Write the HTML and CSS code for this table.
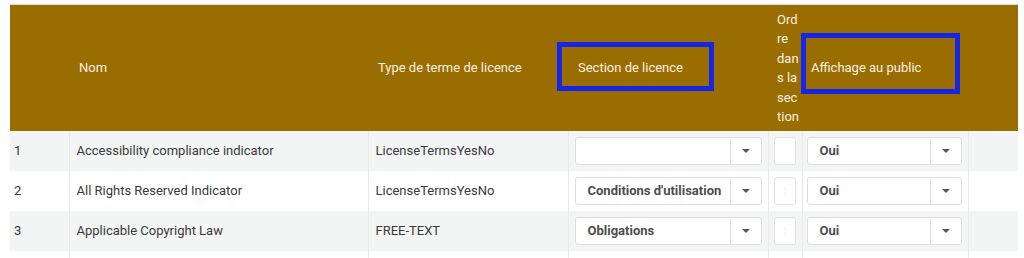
FILE: index.html
```html
<!DOCTYPE html>
<html lang="fr">
<head>
<meta charset="utf-8">
<title>Termes de licence</title>
<link rel="stylesheet" href="styles.css">
</head>
<body>
<div class="wrap">
<table class="grid">
  <colgroup>
    <col class="c-num"><col class="c-nom"><col class="c-type"><col class="c-sect"><col class="c-ord"><col class="c-aff"><col class="c-end">
  </colgroup>
  <thead>
    <tr>
      <th></th>
      <th>Nom</th>
      <th>Type de terme de licence</th>
      <th class="th-sect">Section de licence<span class="mark mark-sect"></span></th>
      <th class="th-ord">Ordre dans la section</th>
      <th class="th-aff">Affichage au public<span class="mark mark-aff"></span></th>
      <th></th>
    </tr>
  </thead>
  <tbody>
    <tr>
      <td>1</td>
      <td>Accessibility compliance indicator</td>
      <td>LicenseTermsYesNo</td>
      <td class="td-sect"><div class="sel"><span class="sel-v"></span><span class="sel-a"><i class="tri"></i></span></div></td>
      <td class="td-ord"><div class="inp"></div></td>
      <td class="td-aff"><div class="sel"><span class="sel-v">Oui</span><span class="sel-a"><i class="tri"></i></span></div></td>
      <td></td>
    </tr>
    <tr>
      <td>2</td>
      <td>All Rights Reserved Indicator</td>
      <td>LicenseTermsYesNo</td>
      <td class="td-sect"><div class="sel"><span class="sel-v">Conditions d'utilisation</span><span class="sel-a"><i class="tri"></i></span></div></td>
      <td class="td-ord"><div class="inp">:</div></td>
      <td class="td-aff"><div class="sel"><span class="sel-v">Oui</span><span class="sel-a"><i class="tri"></i></span></div></td>
      <td></td>
    </tr>
    <tr>
      <td>3</td>
      <td>Applicable Copyright Law</td>
      <td>FREE-TEXT</td>
      <td class="td-sect"><div class="sel"><span class="sel-v">Obligations</span><span class="sel-a"><i class="tri"></i></span></div></td>
      <td class="td-ord"><div class="inp">:</div></td>
      <td class="td-aff"><div class="sel"><span class="sel-v">Oui</span><span class="sel-a"><i class="tri"></i></span></div></td>
      <td></td>
    </tr>
    <tr class="row-more">
      <td></td>
      <td></td>
      <td></td>
      <td></td>
      <td></td>
      <td></td>
      <td></td>
    </tr>
  </tbody>
</table>
</div>
</body>
</html>
```

FILE: styles.css
```css
html, body {
  margin: 0;
  padding: 0;
  background: #ffffff;
  font-family: Roboto, "Liberation Sans", Arial, sans-serif;
  overflow: hidden;
}

.wrap {
  padding: 4px 6px 0 10px;
}

.grid {
  width: 1008px;
  table-layout: fixed;
  border-collapse: collapse;
  border-top: 1px solid #dcdcdc;
  font-size: 13px;
}

.c-num { width: 59px; }
.c-nom { width: 299px; }
.c-type { width: 200px; }
.c-sect { width: 200px; }
.c-ord { width: 34px; }
.c-aff { width: 166px; }
.c-end { width: 50px; }

.grid thead th {
  background: #9a6d00;
  color: #f6f1e4;
  font-weight: 400;
  text-align: left;
  vertical-align: middle;
  line-height: 19.5px;
  padding: 4.5px 10px;
}

.grid thead th.th-ord {
  padding: 4.5px 2.5px 4.5px 9px;
  overflow-wrap: break-word;
}

.grid thead th.th-aff {
  padding-left: 9px;
}

.th-sect, .th-aff {
  position: relative;
}

.mark {
  position: absolute;
  border: 5px solid #1626e8;
  box-sizing: border-box;
}

.mark-sect {
  left: -11px;
  top: 37px;
  width: 157px;
  height: 49px;
}

.mark-aff {
  left: -1px;
  top: 28px;
  width: 159px;
  height: 61px;
}

.grid tbody tr {
  height: 40px;
}

.grid tbody td {
  color: #3a3a3a;
  height: 28px;
  padding: 6px 7px;
  line-height: 28px;
  border-left: 1px solid #e8eaea;
  white-space: nowrap;
  overflow: hidden;
}

.grid tbody td:first-child {
  border-left: none;
  padding-left: 4px;
}

.grid tbody tr:nth-child(odd) td {
  background: #f3f4f4;
}

.grid tbody tr.row-more td {
  background: #ffffff;
}

.grid tbody td.td-sect {
  padding: 6px 6px 6px 6px;
}

.grid tbody td.td-ord {
  padding: 6px 6px 6px 5px;
}

.grid tbody td.td-aff {
  padding: 6px 6px 6px 4px;
}

.sel {
  display: flex;
  height: 28px;
  box-sizing: border-box;
  border: 1px solid #dedede;
  border-radius: 3px;
  background: #ffffff;
}

.sel-v {
  flex: 1;
  padding-left: 12px;
  font-weight: 700;
  color: #4d4d4d;
  line-height: 26px;
  overflow: hidden;
}

.sel-a {
  width: 30px;
  border-left: 1px solid #dedede;
  display: flex;
  align-items: center;
  justify-content: center;
}

.tri {
  width: 0;
  height: 0;
  border-left: 4px solid transparent;
  border-right: 4px solid transparent;
  border-top: 4px solid #555555;
}

.inp {
  width: 22px;
  height: 28px;
  box-sizing: border-box;
  border: 1px solid #e2e2e2;
  border-radius: 3px;
  background: #ffffff;
  color: #d6d6d6;
  font-size: 10px;
  line-height: 26px;
  text-align: center;
}
```
